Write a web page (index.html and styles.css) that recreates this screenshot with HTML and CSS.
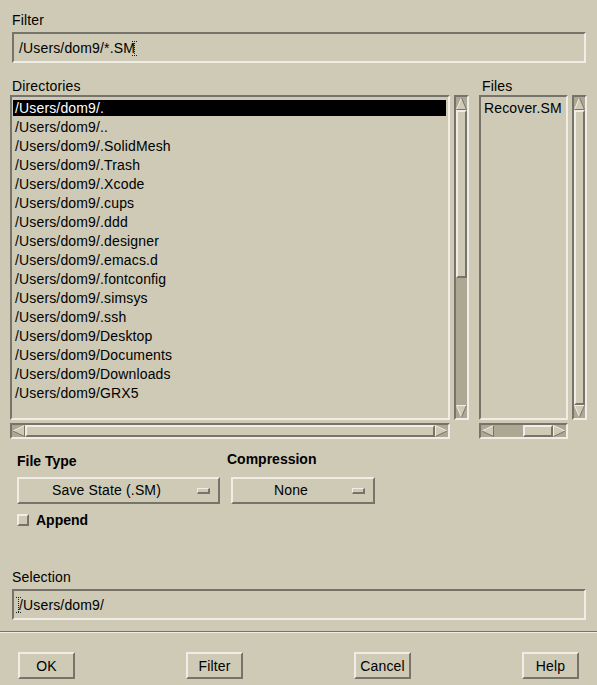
FILE: index.html
```html
<!DOCTYPE html>
<html>
<head>
<meta charset="utf-8">
<link rel="stylesheet" href="styles.css">
</head>
<body>
<div class="dialog">
  <div class="section">
    <div class="label">Filter</div>
    <div class="field"><span>/Users/dom9/*.SM</span><svg class="ibeam" width="5" height="15" viewBox="0 0 5 15"><path d="M0 0.5h5M2.5 0v15M0 14.5h5" stroke="#222" stroke-dasharray="1 1" fill="none"/></svg></div>
  </div>

  <div class="browser">
    <div class="pane dirs">
      <div class="label pane-label">Directories</div>
      <div class="list">
        <div class="item sel">/Users/dom9/.</div>
        <div class="item">/Users/dom9/..</div>
        <div class="item">/Users/dom9/.SolidMesh</div>
        <div class="item">/Users/dom9/.Trash</div>
        <div class="item">/Users/dom9/.Xcode</div>
        <div class="item">/Users/dom9/.cups</div>
        <div class="item">/Users/dom9/.ddd</div>
        <div class="item">/Users/dom9/.designer</div>
        <div class="item">/Users/dom9/.emacs.d</div>
        <div class="item">/Users/dom9/.fontconfig</div>
        <div class="item">/Users/dom9/.simsys</div>
        <div class="item">/Users/dom9/.ssh</div>
        <div class="item">/Users/dom9/Desktop</div>
        <div class="item">/Users/dom9/Documents</div>
        <div class="item">/Users/dom9/Downloads</div>
        <div class="item">/Users/dom9/GRX5</div>
      </div>
      <div class="vscroll">
        <svg class="arrow-v" width="11" height="13" viewBox="0 0 11 13"><polygon points="5.5,1 10.5,12 0.5,12" fill="#cecab5"/><path d="M0.5 12.5L5.5 0.8" stroke="#efede6" fill="none"/><path d="M5.5 0.8L10.5 12.5H0.5" stroke="#76746a" fill="none"/></svg>
        <div class="thumb thumb-dir-v"></div>
        <div class="trough"></div>
        <svg class="arrow-v" width="11" height="13" viewBox="0 0 11 13"><polygon points="0.5,1 10.5,1 5.5,12" fill="#cecab5"/><path d="M5.5 12.2L0.5 0.5H10.5" stroke="#efede6" fill="none"/><path d="M10.5 0.5L5.5 12.2" stroke="#76746a" fill="none"/></svg>
      </div>
      <div class="hscroll">
        <svg class="arrow-h" width="13" height="12" viewBox="0 0 13 12"><polygon points="1,6 12,0.5 12,11.5" fill="#cecab5"/><path d="M0.8 6L12.5 0.5" stroke="#efede6" fill="none"/><path d="M12.5 0.5V11.5L0.8 6" stroke="#76746a" fill="none"/></svg>
        <div class="thumb thumb-fill"></div>
        <svg class="arrow-h" width="13" height="12" viewBox="0 0 13 12"><polygon points="0.5,0.5 12,6 0.5,11.5" fill="#cecab5"/><path d="M0.5 11.5V0.5L12.2 6" stroke="#efede6" fill="none"/><path d="M12.2 6L0.5 11.5" stroke="#76746a" fill="none"/></svg>
      </div>
    </div>

    <div class="pane files">
      <div class="label pane-label">Files</div>
      <div class="list">
        <div class="item">Recover.SM</div>
      </div>
      <div class="vscroll">
        <svg class="arrow-v" width="11" height="13" viewBox="0 0 11 13"><polygon points="5.5,1 10.5,12 0.5,12" fill="#cecab5"/><path d="M0.5 12.5L5.5 0.8" stroke="#efede6" fill="none"/><path d="M5.5 0.8L10.5 12.5H0.5" stroke="#76746a" fill="none"/></svg>
        <div class="thumb thumb-fill"></div>
        <svg class="arrow-v" width="11" height="13" viewBox="0 0 11 13"><polygon points="0.5,1 10.5,1 5.5,12" fill="#cecab5"/><path d="M5.5 12.2L0.5 0.5H10.5" stroke="#efede6" fill="none"/><path d="M10.5 0.5L5.5 12.2" stroke="#76746a" fill="none"/></svg>
      </div>
      <div class="hscroll">
        <svg class="arrow-h" width="13" height="12" viewBox="0 0 13 12"><polygon points="1,6 12,0.5 12,11.5" fill="#cecab5"/><path d="M0.8 6L12.5 0.5" stroke="#efede6" fill="none"/><path d="M12.5 0.5V11.5L0.8 6" stroke="#76746a" fill="none"/></svg>
        <div class="trough"></div>
        <div class="thumb thumb-file-h"></div>
        <svg class="arrow-h" width="13" height="12" viewBox="0 0 13 12"><polygon points="0.5,0.5 12,6 0.5,11.5" fill="#cecab5"/><path d="M0.5 11.5V0.5L12.2 6" stroke="#efede6" fill="none"/><path d="M12.2 6L0.5 11.5" stroke="#76746a" fill="none"/></svg>
      </div>
    </div>
  </div>

  <div class="options">
    <div class="opt-col type-col">
      <div class="label bold opt-label">File Type</div>
      <div class="option type-btn"><span class="opt-text">Save State (.SM)</span><span class="indicator"></span></div>
    </div>
    <div class="opt-col comp-col">
      <div class="label bold opt-label">Compression</div>
      <div class="option comp-btn"><span class="opt-text">None</span><span class="indicator"></span></div>
    </div>
  </div>

  <div class="append">
    <span class="checkbox"></span>
    <span class="label bold">Append</span>
  </div>

  <div class="section selection">
    <div class="label">Selection</div>
    <div class="field"><svg class="ibeam" width="5" height="16" viewBox="0 0 5 16"><path d="M0 0.5h5M2.5 0v16M0 15.5h5" stroke="#222" stroke-dasharray="1 1" fill="none"/></svg><span>/Users/dom9/</span></div>
  </div>

  <div class="separator"></div>

  <div class="buttons">
    <div class="btn">OK</div>
    <div class="btn">Filter</div>
    <div class="btn">Cancel</div>
    <div class="btn">Help</div>
  </div>
</div>
</body>
</html>
```

FILE: styles.css
```css
* { box-sizing: border-box; }

html, body {
  margin: 0;
  padding: 0;
  background: #cecab5;
}

.dialog {
  width: 597px;
  height: 685px;
  overflow: hidden;
  background: #cecab5;
  color: #000;
  font-family: "Liberation Sans", Arial, sans-serif;
  font-size: 14px;
  letter-spacing: 0.15px;
  display: flex;
  flex-direction: column;
}

.label {
  height: 16px;
  line-height: 16px;
  white-space: nowrap;
}

.bold { font-weight: bold; letter-spacing: 0; }

.section {
  padding: 12px 11px 0 12px;
}

.field {
  margin-top: 4px;
  height: 31px;
  border: 2px solid;
  border-color: #76746a #efede6 #efede6 #76746a;
  line-height: 25px;
  padding: 2px 0 0 5px;
  white-space: nowrap;
}

.ibeam {
  display: inline-block;
  vertical-align: -3px;
  margin: 0 -2px 0 -3px;
}

.browser {
  display: flex;
  gap: 10px;
  padding: 15px 0 0 10px;
}

.pane {
  display: grid;
  column-gap: 4px;
  grid-template-rows: 17px 325px 19px;
}

.dirs { grid-template-columns: 440px 15px; }
.files { grid-template-columns: 89px 15px; }

.pane-label {
  grid-column: 1 / -1;
  height: 17px;
  padding-left: 2px;
}
.files .pane-label { padding-left: 3px; }

.list {
  border: 2px solid;
  border-color: #76746a #efede6 #efede6 #76746a;
  padding: 3px 2px 0 1px;
  overflow: hidden;
}

.item {
  height: 16px;
  line-height: 16px;
  margin-bottom: 3px;
  padding-left: 2px;
  white-space: nowrap;
}

.item.sel {
  background: #000;
  color: #fff;
}

.vscroll, .hscroll {
  border: 2px solid;
  border-color: #76746a #efede6 #efede6 #76746a;
  background: #aca893;
  display: flex;
}

.vscroll { flex-direction: column; }

.hscroll {
  margin-top: 3px;
  height: 16px;
}

.arrow-v, .arrow-h {
  display: block;
  flex: none;
}

.thumb {
  background: #cecab5;
  border: 2px solid;
  border-color: #efede6 #76746a #76746a #efede6;
  flex: none;
}

.thumb-fill { flex: 1; }
.thumb-dir-v { height: 168px; }
.thumb-file-h { width: 30px; }

.trough { flex: 1; }

.options {
  margin-top: 14px;
  padding-left: 17px;
  display: flex;
  gap: 7px;
}

.opt-col {
  display: flex;
  flex-direction: column;
}

.opt-label { margin-bottom: 8px; }

.comp-col .opt-label {
  margin-top: -2px;
  margin-bottom: 10px;
}

.option {
  height: 27px;
  border: 2px solid;
  border-color: #efede6 #76746a #76746a #efede6;
  display: flex;
  align-items: center;
  line-height: 23px;
}

.type-btn { width: 203px; }
.comp-btn { width: 144px; margin-left: 4px; }

.opt-text {
  flex: 1;
  text-align: center;
  white-space: nowrap;
}

.indicator {
  width: 13px;
  height: 6px;
  margin: 0 8px 0 3px;
  border-style: solid;
  border-width: 1px 2px 2px 1px;
  border-color: #efede6 #76746a #76746a #efede6;
}

.append {
  margin-top: 8px;
  padding-left: 17px;
  display: flex;
  align-items: center;
  gap: 7px;
  height: 16px;
}

.checkbox {
  width: 12px;
  height: 12px;
  border: 2px solid;
  border-color: #efede6 #76746a #76746a #efede6;
}

.selection { padding-top: 41px; }

.separator {
  margin-top: 11px;
  height: 2px;
  border-top: 1px solid #76746a;
  border-bottom: 1px solid #efede6;
}

.buttons {
  margin-top: 19px;
  padding: 0 18px;
  display: flex;
  justify-content: space-between;
}

.btn {
  width: 57px;
  height: 27px;
  border: 2px solid;
  border-color: #efede6 #76746a #76746a #efede6;
  line-height: 22px;
  padding-top: 1px;
  text-align: center;
}
```
